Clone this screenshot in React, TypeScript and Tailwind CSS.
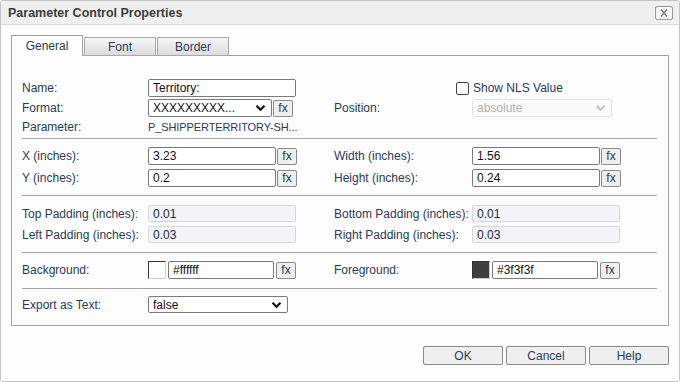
import React from "react";

const font = { fontFamily: '"Liberation Sans", Arial, sans-serif' };

function Fx({ ml = "ml-[1px]" }: { ml?: string }) {
  return (
    <div
      className={`${ml} flex h-[17px] w-[20px] shrink-0 items-center justify-center rounded-[2px] border border-[#8a8a8a] bg-[#efefef] text-[12px] leading-none text-[#2b3a55]`}
    >
      fx
    </div>
  );
}

function Input({ w, value, disabled, h = "h-[18px]" }: { w: string; value: string; disabled?: boolean; h?: string }) {
  return (
    <div
      className={`${w} ${h} flex shrink-0 items-center rounded-[2px] border px-[4px] text-[12px] leading-none ${
        disabled
          ? "border-[#d6d6de] bg-[#f3f3f8] text-[#1a2a44]"
          : "border-[#7a7a7a] bg-white text-[#111]"
      }`}
    >
      {value}
    </div>
  );
}

function Chevron({ color = "#111" }: { color?: string }) {
  return (
    <svg width="11" height="8" viewBox="0 0 11 8">
      <path d="M1.5 1.8 L5.5 5.8 L9.5 1.8" fill="none" stroke={color} strokeWidth="2.2" />
    </svg>
  );
}

function Select({ w, value, disabled, h = "h-[18px]" }: { w: string; value: string; disabled?: boolean; h?: string }) {
  return (
    <div
      className={`${w} ${h} flex shrink-0 items-center justify-between rounded-[2px] border pl-[4px] pr-[5px] text-[12px] leading-none ${
        disabled ? "border-[#e0e0e6] bg-[#fbfbfb] text-[#b0b0b0]" : "border-[#7a7a7a] bg-white text-[#111]"
      }`}
    >
      <span>{value}</span>
      <Chevron color={disabled ? "#c4c4c4" : "#111"} />
    </div>
  );
}

function Label({ w, children }: { w: string; children: React.ReactNode }) {
  return <div className={`${w} shrink-0 text-[12px] leading-none text-[#2b3a55]`}>{children}</div>;
}

function Divider({ mt }: { mt: string }) {
  return <div className={`${mt} mr-[11px] h-px shrink-0 bg-[#a6a6a6]`} />;
}

function Swatch({ color }: { color: string }) {
  return (
    <div
      className="h-[18px] w-[18px] shrink-0 border-l border-t border-[#333] border-r-[#cfcfcf] border-b-[#cfcfcf] border-r border-b"
      style={{ backgroundColor: color }}
    />
  );
}

export default function App() {
  return (
    <div className="h-[382px] w-[680px] bg-white" style={font}>
      <div className="flex h-[382px] w-[680px] flex-col overflow-hidden rounded-[3px] border border-[#c4c4c4] bg-[#fdfdfd]">
        {/* title bar */}
        <div className="flex h-[24px] shrink-0 items-center justify-between border-b border-[#dcdcdc] bg-[#f0f0f0] pl-[7px] pr-[6px]">
          <div className="pt-[1px] text-[12.5px] font-bold leading-none text-[#3c3c3c]">Parameter Control Properties</div>
          <div className="flex h-[14px] w-[18px] items-center justify-center rounded-[2px] border border-[#9a9a9a] bg-[#f4f4f4]">
            <svg width="10" height="8" viewBox="0 0 10 8">
              <path d="M2 0.5 L8 7.5 M8 0.5 L2 7.5" stroke="#7a7a7a" strokeWidth="1.4" />
            </svg>
          </div>
        </div>

        {/* body */}
        <div className="flex flex-1 flex-col pl-[10px] pr-[10px] pt-[10px]">
          {/* tabs */}
          <div className="relative z-10 flex h-[21px] shrink-0 items-end">
            <div className="flex h-[21px] w-[72px] items-center justify-center border border-b-0 border-[#a0a0a0] bg-[#fdfdfd] pb-[1px] text-[12px] leading-none text-[#2b3a55]">
              General
            </div>
            <div className="ml-[1px] flex h-[19px] w-[72px] items-center justify-center border border-[#a8a8a8] bg-gradient-to-b from-[#f6f6f6] to-[#dcdcdc] text-[12px] leading-none text-[#2b3a55]">
              Font
            </div>
            <div className="ml-[1px] flex h-[19px] w-[72px] items-center justify-center border border-[#a8a8a8] bg-gradient-to-b from-[#f6f6f6] to-[#dcdcdc] text-[12px] leading-none text-[#2b3a55]">
              Border
            </div>
          </div>

          {/* panel */}
          <div className="-mt-px flex h-[271px] shrink-0 flex-col border border-[#a0a0a0] pl-[10px]">
            {/* Name */}
            <div className="mt-[23px] flex h-[18px] shrink-0 items-center">
              <Label w="w-[126px]">Name:</Label>
              <div className="w-[186px]">
                <Input w="w-[148px]" value="Territory:" />
              </div>
              <Label w="w-[122px]"> </Label>
              <div className="flex items-center">
                <div className="mt-[1px] h-[13px] w-[13px] rounded-[2px] border border-[#444] bg-white" />
                <span className="ml-[4px] text-[12px] leading-none text-[#2b3a55]">Show NLS Value</span>
              </div>
            </div>
            {/* Format */}
            <div className="mt-[2px] flex h-[18px] shrink-0 items-center">
              <Label w="w-[126px]">Format:</Label>
              <div className="flex w-[186px] items-center">
                <Select w="w-[124px]" value="XXXXXXXXX..." />
                <Fx ml="ml-[1px]" />
              </div>
              <Label w="w-[138px]">Position:</Label>
              <Select w="w-[140px]" value="absolute" disabled />
            </div>
            {/* Parameter */}
            <div className="mt-[1px] flex h-[18px] shrink-0 items-center">
              <Label w="w-[126px]">Parameter:</Label>
              <div className="text-[11px] leading-none tracking-[-0.1px] text-[#2b3a55]">P_SHIPPERTERRITORY-SH...</div>
            </div>
            <Divider mt="mt-[2px]" />

            {/* X */}
            <div className="mt-[8px] flex h-[18px] shrink-0 items-center">
              <Label w="w-[126px]">X (inches):</Label>
              <div className="flex w-[186px] items-center">
                <Input w="w-[128px]" value="3.23" />
                <Fx />
              </div>
              <Label w="w-[138px]">Width (inches):</Label>
              <div className="flex items-center">
                <Input w="w-[128px]" value="1.56" />
                <Fx />
              </div>
            </div>
            {/* Y */}
            <div className="mt-[4px] flex h-[18px] shrink-0 items-center">
              <Label w="w-[126px]">Y (inches):</Label>
              <div className="flex w-[186px] items-center">
                <Input w="w-[128px]" value="0.2" />
                <Fx />
              </div>
              <Label w="w-[138px]">Height (inches):</Label>
              <div className="flex items-center">
                <Input w="w-[128px]" value="0.24" />
                <Fx />
              </div>
            </div>
            <Divider mt="mt-[8px]" />

            {/* Top padding */}
            <div className="mt-[9px] flex h-[17px] shrink-0 items-center">
              <Label w="w-[126px]">Top Padding (inches):</Label>
              <div className="w-[186px]">
                <Input w="w-[148px]" h="h-[17px]" value="0.01" disabled />
              </div>
              <Label w="w-[138px]">Bottom Padding (inches):</Label>
              <Input w="w-[148px]" h="h-[17px]" value="0.01" disabled />
            </div>
            {/* Left padding */}
            <div className="mt-[4px] flex h-[17px] shrink-0 items-center">
              <Label w="w-[126px]">Left Padding (inches):</Label>
              <div className="w-[186px]">
                <Input w="w-[148px]" h="h-[17px]" value="0.03" disabled />
              </div>
              <Label w="w-[138px]">Right Padding (inches):</Label>
              <Input w="w-[148px]" h="h-[17px]" value="0.03" disabled />
            </div>
            <Divider mt="mt-[9px]" />

            {/* Background */}
            <div className="mt-[8px] flex h-[18px] shrink-0 items-center">
              <Label w="w-[126px]">Background:</Label>
              <div className="flex w-[186px] items-center">
                <Swatch color="#ffffff" />
                <div className="ml-[2px]">
                  <Input w="w-[106px]" value="#ffffff" />
                </div>
                <Fx ml="ml-[2px]" />
              </div>
              <Label w="w-[138px]">Foreground:</Label>
              <div className="flex items-center">
                <Swatch color="#3f3f3f" />
                <div className="ml-[2px]">
                  <Input w="w-[106px]" value="#3f3f3f" />
                </div>
                <Fx ml="ml-[2px]" />
              </div>
            </div>
            <Divider mt="mt-[9px]" />

            {/* Export */}
            <div className="mt-[7px] flex h-[17px] shrink-0 items-center">
              <Label w="w-[126px]">Export as Text:</Label>
              <Select w="w-[140px]" h="h-[17px]" value="false" />
            </div>
          </div>

          {/* buttons */}
          <div className="mt-[20px] flex shrink-0 justify-end gap-[3px]">
            {["OK", "Cancel", "Help"].map((b) => (
              <div
                key={b}
                className="flex h-[19px] w-[80px] items-center justify-center rounded-[2px] border border-[#8a8a8a] bg-[#efefef] text-[12px] leading-none text-[#2b3a55]"
              >
                {b}
              </div>
            ))}
          </div>
        </div>
      </div>
    </div>
  );
}
